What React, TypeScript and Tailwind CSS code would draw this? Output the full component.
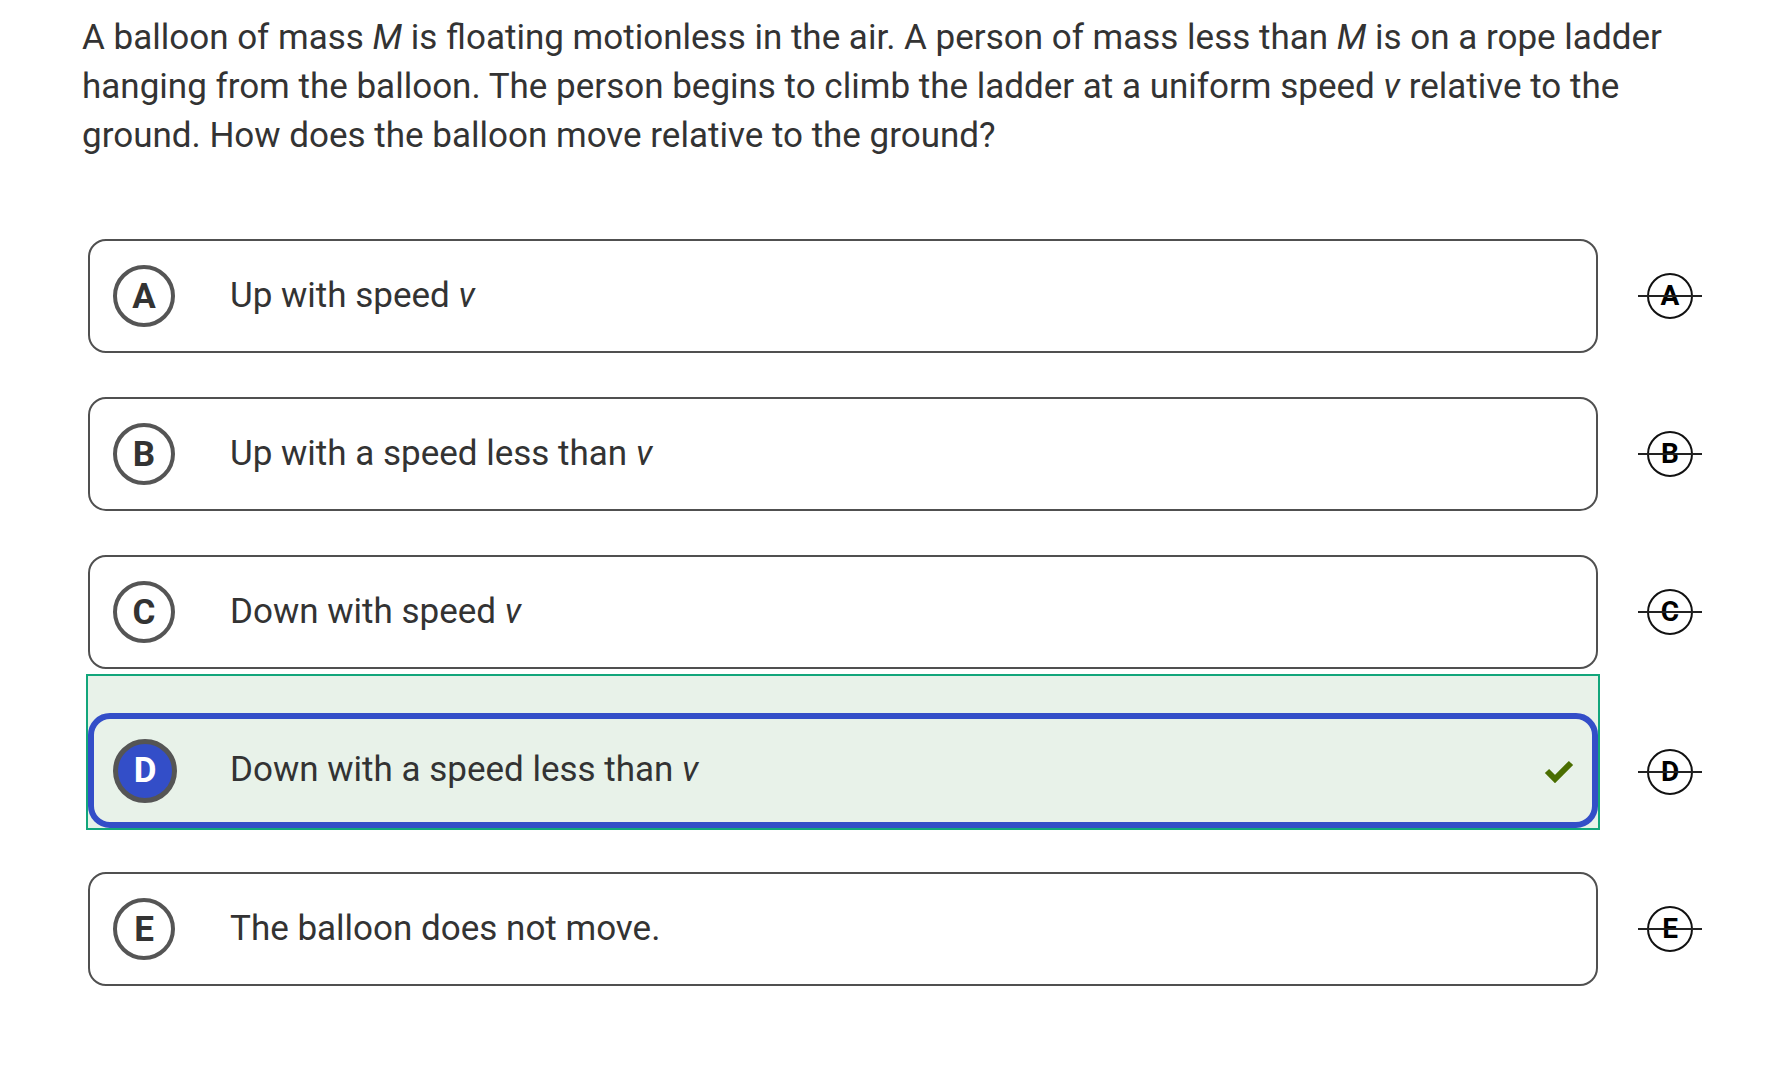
import type {ReactNode} from "react";

const options: {key: string; text: ReactNode}[] = [
  {key: "A", text: <>Up with speed <i>v</i></>},
  {key: "B", text: <>Up with a speed less than <i>v</i></>},
  {key: "C", text: <>Down with speed <i>v</i></>},
  {key: "D", text: <>Down with a speed less than <i>v</i></>},
  {key: "E", text: <>The balloon does not move.</>},
];

const StrikeIcon = ({letter}: {letter: string}) => (
  <div className="relative w-16 h-12 flex items-center justify-center shrink-0">
    <div className="w-[46px] h-[46px] rounded-full border-2 border-[#111] flex items-center justify-center">
      <span className="text-[28px] font-bold leading-none text-black">{letter}</span>
    </div>
    <div className="absolute left-0 right-0 top-1/2 h-[2px] -translate-y-1/2 bg-[#222]" />
  </div>
);

const Check = () => (
  <svg width="30" height="24" viewBox="0 0 30 24" className="ml-auto mr-[18px]">
    <polyline points="3,12 11,20 27,4" fill="none" stroke="#4a6e00" strokeWidth="6" />
  </svg>
);

const App = () => {
  return (
    <div className="min-h-screen bg-white text-[#333] font-['Roboto',sans-serif]">
      <div className="pl-[82px] pt-[13px]">
        <p className="w-[1620px] text-[35px] leading-[49px]">
          A balloon of mass <i>M</i> is floating motionless in the air. A person of mass less than <i>M</i> is on a
          rope ladder hanging from the balloon. The person begins to climb the ladder at a uniform speed <i>v</i>{" "}
          relative to the ground. How does the balloon move relative to the ground?
        </p>

        <div className="ml-[6px] mt-[79px] flex flex-col">
          {options.map((opt, i) => {
            if (opt.key === "D") {
              return (
                <div key={opt.key} className="flex items-end gap-[38px] mt-[5px]">
                  <div className="-ml-[2px] border-2 border-[#12a67b] bg-[#e8f2e9] pt-[37px]">
                    <div className="w-[1510px] h-[115px] border-[6px] border-[#334ec8] rounded-[22px] flex items-center pl-[19px]">
                      <div className="w-[64px] h-[64px] rounded-full border-[5px] border-[#555] bg-[#334ec8] flex items-center justify-center">
                        <span className="text-[35px] font-bold leading-none text-white">{opt.key}</span>
                      </div>
                      <span className="ml-[53px] text-[35px] text-[#333]">{opt.text}</span>
                      <Check />
                    </div>
                  </div>
                  <div className="h-[117px] flex items-center">
                    <StrikeIcon letter={opt.key} />
                  </div>
                </div>
              );
            }
            return (
              <div
                key={opt.key}
                className={`flex items-center gap-[40px] ${i === 0 ? "" : opt.key === "E" ? "mt-[42px]" : "mt-[44px]"}`}
              >
                <div className="w-[1510px] h-[114px] border-2 border-[#505050] rounded-[18px] flex items-center pl-[23px]">
                  <div className="w-[62px] h-[62px] rounded-full border-4 border-[#555] flex items-center justify-center">
                    <span className="text-[35px] font-bold leading-none text-[#333]">{opt.key}</span>
                  </div>
                  <span className="ml-[55px] text-[35px] text-[#333]">{opt.text}</span>
                </div>
                <StrikeIcon letter={opt.key} />
              </div>
            );
          })}
        </div>
      </div>
    </div>
  );
};

export default App;
